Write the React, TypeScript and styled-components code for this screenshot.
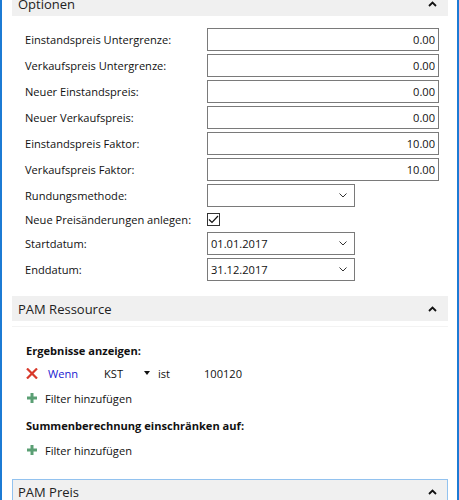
import React from "react";
import styled, { createGlobalStyle } from "styled-components";

const GlobalStyle = createGlobalStyle`
  html, body { margin: 0; padding: 0; background: #ffffff; }
  body { font-family: "Open Sans", "Liberation Sans", Arial, sans-serif; color: #111; }
  * { box-sizing: border-box; }
`;

const Frame = styled.div`
  width: 459px;
  height: 500px;
  overflow: hidden;
  border-left: 2px solid #1c7bd4;
  border-right: 2px solid #1c7bd4;
  padding: 0 9px 0 10px;
  display: flex;
  flex-direction: column;
  background: #fff;
`;

const Panel = styled.section<{ $shift?: number }>`
  display: flex;
  flex-direction: column;
  margin-top: ${(p) => (p.$shift ? `${p.$shift}px` : "0")};
`;

const Header = styled.div<{ $focused?: boolean }>`
  height: 25px;
  flex: none;
  background: #f0f0f0;
  border: ${(p) => (p.$focused ? "1px solid #92c2ef" : "none")};
  padding: ${(p) => (p.$focused ? "0 10px 0 5px" : "0 11px 0 6px")};
  display: flex;
  align-items: center;
  justify-content: space-between;
  font-size: 13px;
  color: #222;
`;

const Chevron = styled.svg`
  width: 9px;
  height: 6px;
  display: block;
`;

const Form = styled.div`
  display: grid;
  grid-template-columns: 182px 1fr;
  row-gap: 3px;
  padding: 12px 9px 15px 13px;
  align-items: center;
`;

const Label = styled.div`
  font-size: 11.1px;
  line-height: 16px;
  color: #111;
  white-space: nowrap;
`;

const Cell = styled.div<{ $h?: number }>`
  height: ${(p) => p.$h ?? 23}px;
  display: flex;
  align-items: center;
`;

const NumberInput = styled.input`
  width: 100%;
  height: 23px;
  border: 1px solid #7a7a7a;
  background: #fff;
  font-family: inherit;
  font-size: 11.1px;
  color: #111;
  text-align: right;
  padding: 0 3px;
  margin: 0;
  outline: none;
`;

const Select = styled.div`
  width: 148px;
  height: 23px;
  border: 1px solid #7a7a7a;
  background: #fff;
  display: flex;
  align-items: center;
  justify-content: space-between;
  padding: 0 7px 0 3px;
  font-size: 11.1px;
  color: #111;
`;

const Box = styled.div`
  width: 13px;
  height: 13px;
  border: 1px solid #333;
  background: #fff;
  display: flex;
  align-items: center;
  justify-content: center;
`;

const FilterBody = styled.div`
  display: flex;
  flex-direction: column;
  padding: 0 0 19px 14px;
`;

const Divider = styled.div`
  height: 1px;
  background: #f3f3f3;
  margin: 5px 0 0 -14px;
`;

const GroupTitle = styled.div<{ $top: number }>`
  margin-top: ${(p) => p.$top}px;
  height: 20px;
  line-height: 20px;
  font-size: 11.1px;
  font-weight: 700;
  color: #111;
`;

const CondRow = styled.div<{ $top: number }>`
  margin-top: ${(p) => p.$top}px;
  height: 20px;
  display: grid;
  grid-template-columns: 22px 56px 40px 14px 46px auto;
  align-items: center;
  font-size: 11.1px;
  color: #111;
`;

const Link = styled.span`
  color: #2020d0;
`;

const AddRow = styled.div<{ $top: number }>`
  margin-top: ${(p) => p.$top}px;
  height: 20px;
  display: flex;
  align-items: center;
  gap: 8px;
  font-size: 11.1px;
  color: #111;
  padding-left: 1px;
`;

const Icon = styled.svg`
  display: block;
`;

const UpChevron = () => (
  <Chevron viewBox="0 0 9 6">
    <polyline points="1,5 4.5,1.5 8,5" fill="none" stroke="#111" strokeWidth="1.8" />
  </Chevron>
);

const DownChevron = () => (
  <Icon width="8" height="5" viewBox="0 0 8 5">
    <polyline points="0.5,0.5 4,4 7.5,0.5" fill="none" stroke="#333" strokeWidth="1" />
  </Icon>
);

const Plus = () => (
  <Icon width="10" height="10" viewBox="0 0 10 10">
    <rect x="3.5" y="0" width="3" height="10" fill="#5b9f74" />
    <rect x="0" y="3.5" width="10" height="3" fill="#5b9f74" />
  </Icon>
);

const Cross = () => (
  <Icon width="12" height="11" viewBox="0 0 12 11">
    <path d="M1 0.5 L11 10.5 M11 0.5 L1 10.5" stroke="#d8392b" strokeWidth="2.2" fill="none" />
  </Icon>
);

const Caret = () => (
  <Icon width="6" height="4" viewBox="0 0 6 4">
    <polygon points="0,0 6,0 3,4" fill="#111" />
  </Icon>
);

const numberRows: [string, string][] = [
  ["Einstandspreis Untergrenze:", "0.00"],
  ["Verkaufspreis Untergrenze:", "0.00"],
  ["Neuer Einstandspreis:", "0.00"],
  ["Neuer Verkaufspreis:", "0.00"],
  ["Einstandspreis Faktor:", "10.00"],
  ["Verkaufspreis Faktor:", "10.00"],
];

export default function App() {
  return (
    <>
      <GlobalStyle />
      <Frame>
        <Panel $shift={-9}>
          <Header>
            <span>Optionen</span>
            <UpChevron />
          </Header>
          <Form>
            {numberRows.map(([label, value]) => (
              <React.Fragment key={label}>
                <Label>{label}</Label>
                <Cell>
                  <NumberInput readOnly value={value} />
                </Cell>
              </React.Fragment>
            ))}
            <Label>Rundungsmethode:</Label>
            <Cell>
              <Select>
                <span />
                <DownChevron />
              </Select>
            </Cell>
            <Label>Neue Preisänderungen anlegen:</Label>
            <Cell $h={19}>
              <Box>
                <Icon width="11" height="9" viewBox="0 0 11 9">
                  <polyline points="1,4.5 4,7.5 10,1" fill="none" stroke="#111" strokeWidth="1.2" />
                </Icon>
              </Box>
            </Cell>
            <Label>Startdatum:</Label>
            <Cell>
              <Select>
                <span>01.01.2017</span>
                <DownChevron />
              </Select>
            </Cell>
            <Label>Enddatum:</Label>
            <Cell>
              <Select>
                <span>31.12.2017</span>
                <DownChevron />
              </Select>
            </Cell>
          </Form>
        </Panel>

        <Panel>
          <Header>
            <span>PAM Ressource</span>
            <UpChevron />
          </Header>
          <FilterBody>
            <Divider />
            <GroupTitle $top={14}>Ergebnisse anzeigen:</GroupTitle>
            <CondRow $top={2}>
              <Cross />
              <Link>Wenn</Link>
              <span>KST</span>
              <Caret />
              <span>ist</span>
              <span>100120</span>
            </CondRow>
            <AddRow $top={5}>
              <Plus />
              <span>Filter hinzufügen</span>
            </AddRow>
            <GroupTitle $top={8}>Summenberechnung einschränken auf:</GroupTitle>
            <AddRow $top={4}>
              <Plus />
              <span>Filter hinzufügen</span>
            </AddRow>
          </FilterBody>
        </Panel>

        <Panel>
          <Header $focused>
            <span>PAM Preis</span>
            <UpChevron />
          </Header>
        </Panel>
      </Frame>
    </>
  );
}
